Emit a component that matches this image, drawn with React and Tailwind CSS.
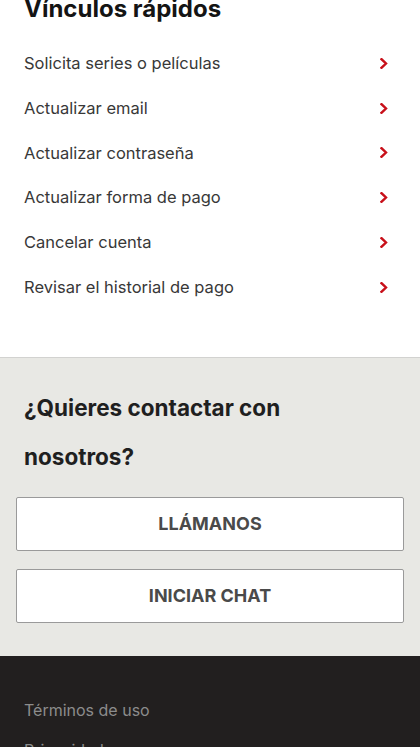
const links = [
  "Solicita series o películas",
  "Actualizar email",
  "Actualizar contraseña",
  "Actualizar forma de pago",
  "Cancelar cuenta",
  "Revisar el historial de pago",
]

function Chevron() {
  return (
    <svg width="8" height="11" viewBox="0 0 8 11" fill="none" className="shrink-0">
      <path d="M1.5 1.2 L6 5.5 L1.5 9.8" stroke="#c8101a" strokeWidth="2.4" strokeLinecap="square" />
    </svg>
  )
}

export default function App() {
  return (
    <div className="w-[420px] h-[747px] overflow-hidden bg-white font-['Inter','Liberation_Sans',sans-serif]">
      {/* quick links */}
      <section className="px-6 pb-[47px]">
        <h2 className="mt-[-7px] text-[24px] leading-[32px] font-bold text-[#141414]">Vínculos rápidos</h2>
        <ul className="mt-[16px]">
          {links.map((label) => (
            <li key={label} className="h-[44.8px] flex items-center justify-between pr-[8px]">
              <span className="text-[16.5px] text-[#383838]">{label}</span>
              <Chevron />
            </li>
          ))}
        </ul>
      </section>

      {/* contact */}
      <section className="bg-[#e8e8e4] border-t border-[#d2d2d0] px-4 pt-[25px] pb-[33px]">
        <h3 className="px-2 max-w-[300px] text-[22.5px] leading-[49px] font-bold text-[#1f1f1f]">
          ¿Quieres contactar con nosotros?
        </h3>
        <div className="mt-[16px] flex flex-col gap-[18px]">
          <button className="h-[54px] w-full bg-white border border-[#9a9a9a] rounded-[2px] text-[18px] font-bold text-[#4a4a4a]">
            LLÁMANOS
          </button>
          <button className="h-[54px] w-full bg-white border border-[#9a9a9a] rounded-[2px] text-[18px] font-bold text-[#4a4a4a]">
            INICIAR CHAT
          </button>
        </div>
      </section>

      {/* footer */}
      <footer className="bg-[#221f1f] px-6 pt-[42px] pb-10">
        <ul className="flex flex-col gap-[16px]">
          <li className="text-[16px] leading-[24px] text-[#8c8c8c]">Términos de uso</li>
          <li className="text-[16px] leading-[24px] text-[#8c8c8c]">Privacidad</li>
        </ul>
      </footer>
    </div>
  )
}
